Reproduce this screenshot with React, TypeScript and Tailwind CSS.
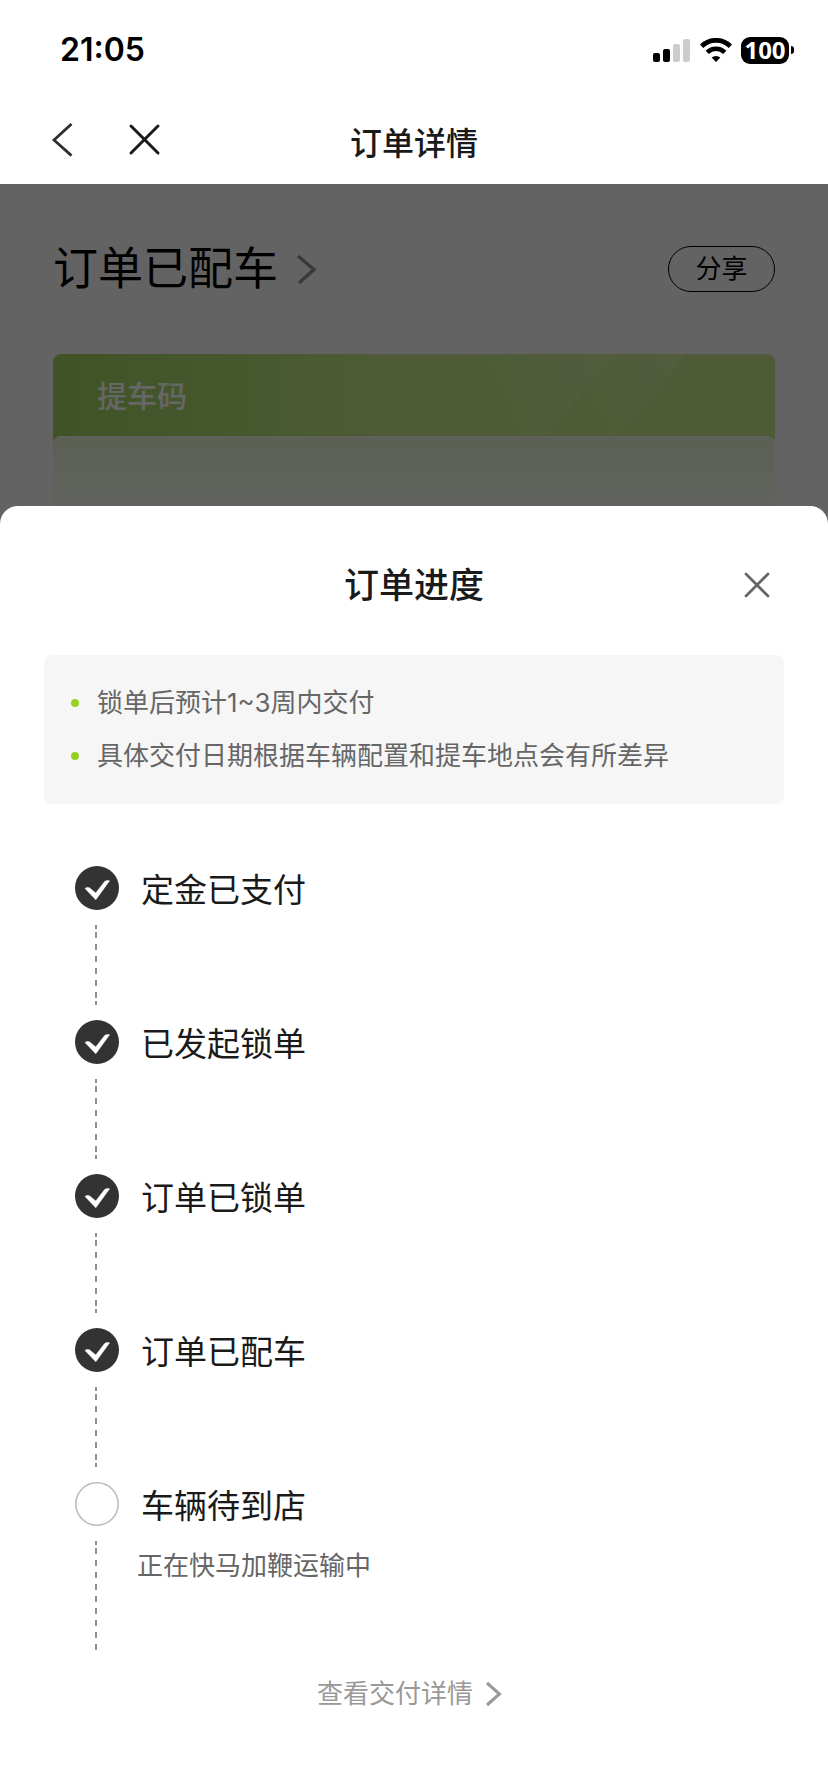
type Step = { title: string; done: boolean; note?: string; lineHeight: number };

const steps: Step[] = [
  { title: "定金已支付", done: true, lineHeight: 80 },
  { title: "已发起锁单", done: true, lineHeight: 80 },
  { title: "订单已锁单", done: true, lineHeight: 80 },
  { title: "订单已配车", done: true, lineHeight: 80 },
  { title: "车辆待到店", done: false, note: "正在快马加鞭运输中", lineHeight: 109 },
];

const notes = ["锁单后预计1~3周内交付", "具体交付日期根据车辆配置和提车地点会有所差异"];

function StatusBar() {
  return (
    <div className="flex h-[100px] items-center justify-between pl-[60px] pr-[34px]">
      <time className="font-[Inter,sans-serif] text-[32px] leading-10 font-semibold text-black">21:05</time>
      <div className="flex items-center">
        <svg width="37" height="24" viewBox="0 0 37 24" aria-label="信号">
          <rect x="0" y="15" width="7" height="9" rx="2" fill="#000" />
          <rect x="10" y="11" width="7" height="13" rx="2" fill="#000" />
          <rect x="20" y="6" width="7" height="18" rx="2" fill="#ccc" />
          <rect x="30" y="1" width="7" height="23" rx="2" fill="#ccc" />
        </svg>
        <svg className="ml-[10px]" width="32" height="24" viewBox="0 0 32 24" aria-label="无线网络">
          <path d="M1.6 8.2A20.6 20.6 0 0 1 30.4 8.2" fill="none" stroke="#000" strokeWidth="4.8" />
          <path d="M7.2 14.4A12.4 12.4 0 0 1 24.8 14.4" fill="none" stroke="#000" strokeWidth="4.6" />
          <path d="M16 24L11.6 19.6A6.5 6.5 0 0 1 20.4 19.6Z" fill="#000" />
        </svg>
        <div className="ml-[9px] flex items-center gap-[2px]">
          <div className="flex h-[27px] w-12 items-center justify-center rounded-[9px] bg-black font-[Open_Sans,sans-serif] text-2xl leading-[26px] font-bold text-white">
            100
          </div>
          <div className="h-2 w-[3px] rounded-r-full bg-black" />
        </div>
      </div>
    </div>
  );
}

function NavBar() {
  return (
    <header className="grid h-[84px] grid-cols-[1fr_auto_1fr] items-center bg-white px-[50px]">
      <div className="flex items-center gap-[52px] pb-1">
        <button type="button" aria-label="返回">
          <svg width="24" height="34" viewBox="0 0 24 34" fill="none" stroke="#2f2f2f" strokeWidth="2.8">
            <path d="M21.5 1L4 17L21.5 32.6" />
          </svg>
        </button>
        <button type="button" aria-label="关闭页面">
          <svg width="36" height="34" viewBox="0 0 36 34" fill="none" stroke="#1a1a1a" strokeWidth="3" strokeLinecap="round">
            <path d="M5 3L32 30M32 3L5 30" />
          </svg>
        </button>
      </div>
      <h1 className="pt-1 text-[32px] leading-10 font-medium text-[#1a1a1a]">订单详情</h1>
    </header>
  );
}

function OrderPage() {
  return (
    <section className="col-start-1 row-start-1 bg-[#f8f8f8] px-[53px] pt-[50px]">
      <div className="flex items-center justify-between">
        <button type="button" className="flex items-center gap-[18px] text-[45px] leading-[70px] text-black">
          订单已配车
          <svg width="24" height="32" viewBox="0 0 24 32" fill="none" stroke="#8f8f8f" strokeWidth="3.4">
            <path d="M2 3L18 16.5L3 30" />
          </svg>
        </button>
        <button type="button" className="h-[46px] w-[107px] rounded-full border border-black text-[26px] leading-[40px] text-black">
          分享
        </button>
      </div>
      <div className="mt-[50px] overflow-hidden rounded-t-[8px] bg-linear-to-r from-[#a0cf5e] via-[#b0db74] via-25% to-[#c2e488] to-45%">
        <div className="grid h-[82px] grid-cols-1">
          <svg className="col-start-1 row-start-1 justify-self-end" viewBox="0 0 340 82" width="340" height="82" aria-hidden="true">
            <defs>
              <linearGradient id="beam-left" gradientUnits="userSpaceOnUse" x1="175" y1="10" x2="60" y2="60">
                <stop offset="0" stopColor="#fff" stopOpacity="0.16" />
                <stop offset="1" stopColor="#fff" stopOpacity="0" />
              </linearGradient>
              <linearGradient id="beam-right" gradientUnits="userSpaceOnUse" x1="245" y1="8" x2="150" y2="60">
                <stop offset="0" stopColor="#fff" stopOpacity="0.16" />
                <stop offset="1" stopColor="#fff" stopOpacity="0" />
              </linearGradient>
            </defs>
            <path d="M180 0L110 82H0V0Z" fill="url(#beam-left)" />
            <path d="M252 0L182 82H110L180 0Z" fill="url(#beam-right)" />
          </svg>
          <p className="col-start-1 row-start-1 pl-11 text-[30px] leading-[84px] font-medium text-white">提车码</p>
        </div>
        <div className="h-40 rounded-t-[8px] border-t-2 border-[#eef5e4] bg-linear-to-b from-[#e4f0d2] to-[#f6f8f3] to-50%" />
      </div>
    </section>
  );
}

function DashedLine({ height }: { height: number }) {
  const tail = (height - 7) % 12 < 6;
  return (
    <svg width="2" height={height} className="text-[#8f8f8f]" stroke="currentColor" strokeWidth="2" aria-hidden="true">
      <path d="M1 0V4" />
      <path d={`M1 7V${tail ? height - 7 : height}`} strokeDasharray="6 6" />
      {tail && <path d={`M1 ${height - 4}V${height}`} />}
    </svg>
  );
}

function StepMark({ done }: { done: boolean }) {
  return (
    <svg width="44" height="44" viewBox="0 0 44 44" role="img" aria-label={done ? "已完成" : "进行中"}>
      {done ? (
        <>
          <circle cx="22" cy="22" r="22" fill="#333" />
          <path d="M10 22.4Q12 20.8 14.4 21.8L20.8 27L29.4 15.8Q31 14 34.6 14.8L20.8 33.8Z" fill="#fff" stroke="#fff" strokeWidth="0.5" />
        </>
      ) : (
        <circle cx="22" cy="22" r="21.2" fill="#fff" stroke="#bbb" strokeWidth="1.6" />
      )}
    </svg>
  );
}

function ProgressSheet() {
  return (
    <section
      role="dialog"
      aria-labelledby="sheet-title"
      className="col-start-1 row-start-1 mt-[322px] flex flex-col rounded-t-[18px] bg-white px-11 pb-16"
    >
      <div className="grid grid-cols-[1fr_auto_1fr] items-center pt-[52px]">
        <h2 id="sheet-title" className="col-start-2 text-[35px] leading-[54px] font-medium text-[#1a1a1a]">
          订单进度
        </h2>
        <button type="button" aria-label="关闭" className="mr-3 justify-self-end">
          <svg width="30" height="30" viewBox="0 0 30 30" fill="none" stroke="#666" strokeWidth="2.8" strokeLinecap="round">
            <path d="M4 4L26 26M26 4L4 26" />
          </svg>
        </button>
      </div>

      <ul className="mt-[43px] rounded-lg bg-[#f6f6f6] pt-[21px] pr-6 pb-[22px] pl-[27px] text-[26px] leading-[53px] text-[#666]">
        {notes.map((note) => (
          <li key={note} className="flex items-center gap-[18px]">
            <span className="size-2 shrink-0 rounded-full bg-[#96cf24]" />
            {note}
          </li>
        ))}
      </ul>

      <ol className="mt-[62px] flex flex-col gap-[15px] pl-[31px]">
        {steps.map((step) => (
          <li key={step.title} className="flex gap-[18px]">
            <div className="flex w-11 flex-col gap-[15px]">
              <StepMark done={step.done} />
              <div className="pl-5">
                <DashedLine height={step.lineHeight} />
              </div>
            </div>
            <div>
              <h3 className="pl-1 text-[33px] leading-[48px] text-[#1a1a1a]">{step.title}</h3>
              {step.note && <p className="mt-4 text-[26px] leading-10 text-[#666]">{step.note}</p>}
            </div>
          </li>
        ))}
      </ol>

      <a href="#delivery" className="mt-6 flex items-center justify-center gap-3 self-center pr-2 text-[26px] leading-10 text-[#999]">
        查看交付详情
        <svg width="18" height="26" viewBox="0 0 18 26" fill="none" stroke="#999" strokeWidth="3">
          <path d="M2 2L14.5 13L2 24" />
        </svg>
      </a>
    </section>
  );
}

export default function App() {
  return (
    <div className="flex min-h-screen flex-col bg-white font-[Inter,'Noto_Sans_CJK_SC',sans-serif]">
      <StatusBar />
      <NavBar />
      <main className="grid flex-1 grid-cols-1">
        <OrderPage />
        <div className="z-10 col-start-1 row-start-1 bg-black/60" aria-hidden="true" />
        <div className="z-20 col-start-1 row-start-1 grid">
          <ProgressSheet />
        </div>
      </main>
    </div>
  );
}
